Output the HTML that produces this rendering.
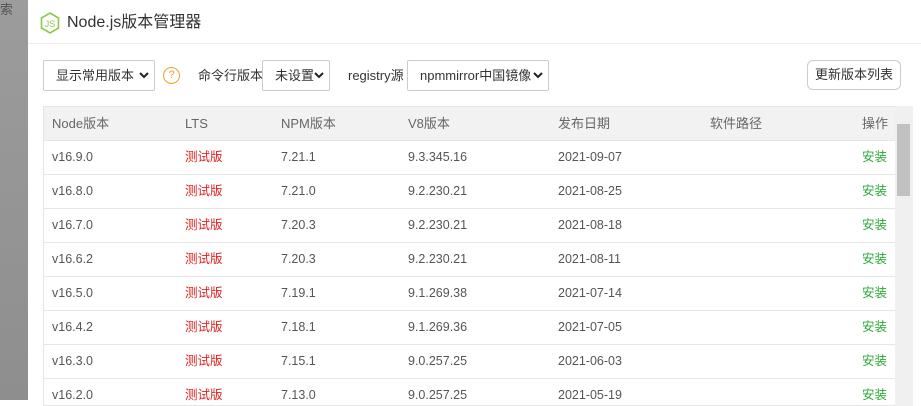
<!DOCTYPE html>
<html><head><meta charset="utf-8"><style>
*{margin:0;padding:0;box-sizing:border-box}
body{width:921px;height:400px;overflow:hidden;font-family:"Liberation Sans","Noto Sans CJK SC",sans-serif;font-size:13px;color:#333;background:#fff;position:relative}
.left{position:absolute;left:0;top:0;width:28px;height:400px;background:linear-gradient(#9c9c9c,#8e8e8e)}
.modal{position:absolute;left:28px;top:2px;width:893px;height:398px;background:#fff}
.hd{height:42px;border-bottom:1px solid #eee;display:flex;align-items:center;padding-left:12px;font-size:16px;color:#333;line-height:20px}
.sel{position:absolute;height:31px;border:1px solid #ccc;border-radius:2px;padding-left:12px;font-size:13px;color:#333;line-height:29px}
.sel svg{position:absolute;right:5px;top:11px}
.lbl{position:absolute;font-size:13px;color:#333;top:58px;line-height:31px}
.btn{position:absolute;left:779px;top:58px;width:94px;height:30px;border:1px solid #ccc;border-radius:6px;font-size:13px;text-align:center;line-height:28px}
.tbl{position:absolute;left:15px;top:104px;width:870px;height:300px;border:1px solid #e6e6e6;overflow:hidden}
.row{height:34px;border-bottom:1px solid #e6e6e6;position:relative;font-size:12.5px;color:#555}
.row.h{background:#f2f2f2;color:#666;font-size:13px}
.row div{position:absolute;top:0;line-height:33px}
.r{color:#e02020}.g{color:#2aa838}
.sb{position:absolute;left:867px;top:104px;width:18px;height:300px;background:#f0f0f0}
.sb i{position:absolute;left:2px;top:18px;width:13px;height:72px;background:#c1c1c1}
</style></head><body>
<div class="left"><span style="position:absolute;top:2px;left:0;color:#555;font-size:13px;line-height:16px">索</span></div>
<div class="modal">
<div class="hd"><svg width="20" height="22" viewBox="0 0 20 22" style="margin-right:7px"><path d="M10 1L18.5 6V16L10 21L1.5 16V6Z" fill="none" stroke="#8cc84b" stroke-width="1.6"/><text x="10" y="15" font-size="9" text-anchor="middle" fill="#8cc84b" font-family="Liberation Sans">JS</text></svg>Node.js版本管理器</div>
<div class="sel" style="left:15px;top:58px;width:112px">显示常用版本<svg width="10" height="7" viewBox="0 0 10 7"><path d="M1 1L5 5L9 1" fill="none" stroke="#222" stroke-width="2"/></svg></div>
<div style="position:absolute;left:135px;top:65px;width:17px;height:17px;border:1.5px solid #f0a030;border-radius:50%;color:#f0a030;font-size:11px;text-align:center;line-height:14px">?</div>
<div class="lbl" style="left:170px">命令行版本</div>
<div class="sel" style="left:234px;top:58px;width:68px">未设置<svg width="10" height="7" viewBox="0 0 10 7"><path d="M1 1L5 5L9 1" fill="none" stroke="#222" stroke-width="2"/></svg></div>
<div class="lbl" style="left:320px">registry源</div>
<div class="sel" style="left:379px;top:58px;width:142px">npmmirror中国镜像<svg width="10" height="7" viewBox="0 0 10 7"><path d="M1 1L5 5L9 1" fill="none" stroke="#222" stroke-width="2"/></svg></div>
<div class="btn">更新版本列表</div>
<div class="tbl">
<div class="row h"><div style="left:8px">Node版本</div><div style="left:141px">LTS</div><div style="left:237px">NPM版本</div><div style="left:364px">V8版本</div><div style="left:514px">发布日期</div><div style="left:666px">软件路径</div><div style="left:818px">操作</div></div>
<div class="row"><div style="left:8px">v16.9.0</div><div class="r" style="left:141px">测试版</div><div style="left:237px">7.21.1</div><div style="left:364px">9.3.345.16</div><div style="left:514px">2021-09-07</div><div class="g" style="left:818px">安装</div></div>
<div class="row"><div style="left:8px">v16.8.0</div><div class="r" style="left:141px">测试版</div><div style="left:237px">7.21.0</div><div style="left:364px">9.2.230.21</div><div style="left:514px">2021-08-25</div><div class="g" style="left:818px">安装</div></div>
<div class="row"><div style="left:8px">v16.7.0</div><div class="r" style="left:141px">测试版</div><div style="left:237px">7.20.3</div><div style="left:364px">9.2.230.21</div><div style="left:514px">2021-08-18</div><div class="g" style="left:818px">安装</div></div>
<div class="row"><div style="left:8px">v16.6.2</div><div class="r" style="left:141px">测试版</div><div style="left:237px">7.20.3</div><div style="left:364px">9.2.230.21</div><div style="left:514px">2021-08-11</div><div class="g" style="left:818px">安装</div></div>
<div class="row"><div style="left:8px">v16.5.0</div><div class="r" style="left:141px">测试版</div><div style="left:237px">7.19.1</div><div style="left:364px">9.1.269.38</div><div style="left:514px">2021-07-14</div><div class="g" style="left:818px">安装</div></div>
<div class="row"><div style="left:8px">v16.4.2</div><div class="r" style="left:141px">测试版</div><div style="left:237px">7.18.1</div><div style="left:364px">9.1.269.36</div><div style="left:514px">2021-07-05</div><div class="g" style="left:818px">安装</div></div>
<div class="row"><div style="left:8px">v16.3.0</div><div class="r" style="left:141px">测试版</div><div style="left:237px">7.15.1</div><div style="left:364px">9.0.257.25</div><div style="left:514px">2021-06-03</div><div class="g" style="left:818px">安装</div></div>
<div class="row"><div style="left:8px">v16.2.0</div><div class="r" style="left:141px">测试版</div><div style="left:237px">7.13.0</div><div style="left:364px">9.0.257.25</div><div style="left:514px">2021-05-19</div><div class="g" style="left:818px">安装</div></div>
</div>
<div class="sb"><i></i></div>
</div>
</body></html>
